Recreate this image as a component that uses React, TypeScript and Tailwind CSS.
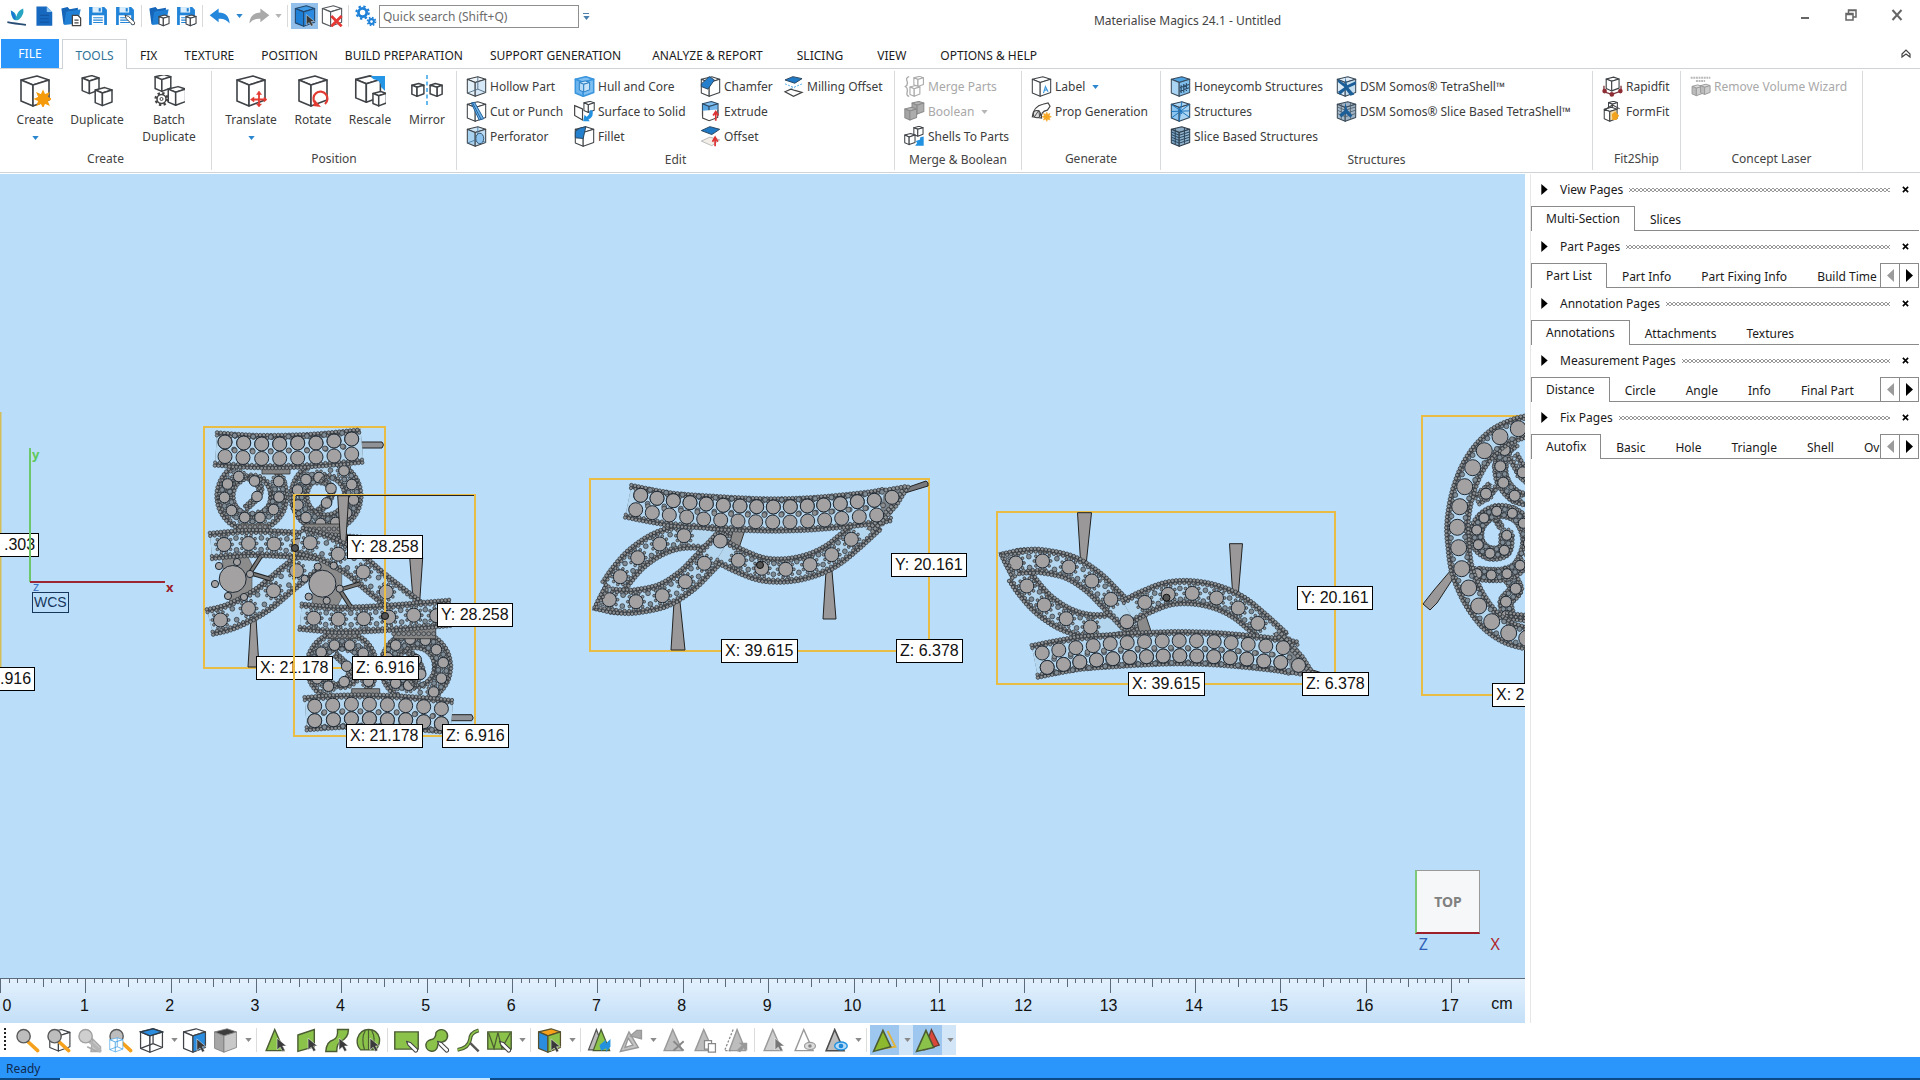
import type { ReactNode } from "react";
import clsx from "clsx";

type Pt = [number, number];

/* ---------- small drawing helpers for the icons ---------- */

type CubeProps = {
  x?: number;
  y?: number;
  s?: number;
  top?: string;
  left?: string;
  right?: string;
  line?: string;
  w?: number;
};

function Cube({ x = 0, y = 0, s = 1, top = "#fff", left = "#fff", right = "#fff", line = "#3f4347", w = 1.6 }: CubeProps) {
  return (
    <g transform={`translate(${x} ${y}) scale(${s})`} stroke={line} strokeWidth={w / s} strokeLinejoin="round">
      <path d="M2 5 18 1 30 5 14 10Z" fill={top} />
      <path d="M2 5 14 10V31L2 26Z" fill={left} />
      <path d="M14 10 30 5V25L14 31Z" fill={right} />
    </g>
  );
}

function Wire({ line = "#2d8fe0", w = 1.4 }: { line?: string; w?: number }) {
  return (
    <g fill="none" stroke={line} strokeWidth={w} strokeLinejoin="round">
      <path d="M2 26 18 20 30 25M18 20V1" />
    </g>
  );
}

function Pointer({ x, y, fill = "#3a3a3a" }: { x: number; y: number; fill?: string }) {
  return (
    <path
      transform={`translate(${x} ${y})`}
      d="M0 0V15L4 11.5 7 17 10 15.5 7 10H12Z"
      fill={fill}
      stroke="#fff"
      strokeWidth=".6"
    />
  );
}

function Pen({ x, y }: { x: number; y: number }) {
  return (
    <path
      transform={`translate(${x} ${y})`}
      d="M0 0 5 1.5 14 10Q15 14 11 14L2 5Z"
      fill="#fff"
      stroke="#444"
      strokeWidth="1.4"
      strokeLinejoin="round"
    />
  );
}

function Lens({ gray = false }: { gray?: boolean }) {
  return (
    <g>
      <path d="M16 17 29 29" stroke={gray ? "#b5b5b5" : "#f5a11c"} strokeWidth="4.5" strokeLinecap="round" />
      <circle cx="11" cy="10.5" r="8.5" fill={gray ? "#cfcfcf" : "#bdbdbd"} stroke={gray ? "#a0a0a0" : "#5a5a5a"} strokeWidth="1.8" />
    </g>
  );
}

const folder = (
  <g fill="#1f7fd4">
    <path d="M2 5 11 3 14 6 26 4V9L10 10 7 28H5Z" fill="#1565b8" />
    <path d="M9 10 30 6 26 27 6 29Z" />
  </g>
);

const floppy = (
  <g>
    <path d="M3 3H25L29 7V29H3Z" fill="#2184d8" />
    <rect x="8" y="3" width="14" height="8" fill="#dceefb" />
    <rect x="17" y="4.5" width="3" height="5" fill="#2184d8" />
    <rect x="7" y="15" width="18" height="14" fill="#fff" />
    <path d="M9 18.5H23M9 22H23M9 25.5H23" stroke="#2184d8" strokeWidth="1.5" />
  </g>
);

const tri = "M15 2 27 29 4 29Z";
const star = "M24 17 25.5 20.5 29 19 27.5 22.5 31 24 27.5 25.5 29 29 25.5 27.5 24 31 22.5 27.5 19 29 20.5 25.5 17 24 20.5 22.5 19 19 22.5 20.5Z";
const green = "#8bc34a";

const icons: Record<string, ReactNode> = {
  logo: (
    <g>
      <path d="M7 8Q14 10 15 17 17 8 25 5 27 14 19 21 13 24 10 20 7 15 7 8Z" fill="#29a5c4" />
      <path d="M7 8Q14 12 14 21 9 21 7 8Z" fill="#1976d2" />
      <path d="M2 25Q12 27 29 29" stroke="#274d75" strokeWidth="2.5" fill="none" />
    </g>
  ),
  doc: (
    <g>
      <path d="M5 2H20L28 10V30H5Z" fill="#1769c0" />
      <path d="M20 2V10H28Z" fill="#8cc4f2" />
      <path d="M10 15H23M10 20H23M10 25H23" stroke="#1257a5" strokeWidth="1.8" />
    </g>
  ),
  open: (
    <g>
      {folder}
      <path d="M18 15H26L30 19V30H18Z" fill="#fff" stroke="#444" strokeWidth="1.8" />
      <path d="M21 22H27M21 26H27" stroke="#444" strokeWidth="1.5" />
    </g>
  ),
  save: floppy,
  saveAs: (
    <g>
      {floppy}
      <Pen x={16} y={15} />
    </g>
  ),
  openPart: (
    <g>
      {folder}
      <Cube x={15} y={14} s={0.52} w={1.6} />
    </g>
  ),
  savePart: (
    <g>
      {floppy}
      <Cube x={15} y={14} s={0.52} w={1.6} />
    </g>
  ),
  undo: <path d="M1 15 14 5V11Q29 11 30 27 24 19 14 20V25Z" fill="#2487dc" />,
  redo: <path d="M31 15 18 5V11Q3 11 2 27 8 19 18 20V25Z" fill="#a9a9a9" />,
  select: (
    <g>
      <Cube top="#3f9be6" left="#1e7fd6" right="#2c8be0" line="#24486d" />
      <Pointer x={18} y={14} />
    </g>
  ),
  deselect: (
    <g>
      <Cube line="#55595d" />
      <path d="M15 16 30 31M30 16 15 31" stroke="#e53935" strokeWidth="4" />
    </g>
  ),
  gears: (
    <g fill="none" stroke="#1f82d8">
      <circle cx="11" cy="11" r="6" strokeWidth="4" />
      <circle cx="11" cy="11" r="9" strokeWidth="3" strokeDasharray="3.5 3.56" />
      <circle cx="24" cy="24" r="3.5" strokeWidth="3" />
      <circle cx="24" cy="24" r="5.8" strokeWidth="2.4" strokeDasharray="2.3 2.25" />
    </g>
  ),
  create: (
    <g>
      <Cube />
      <path d={star} fill="#f59b0b" stroke="#f59b0b" strokeWidth="2" />
    </g>
  ),
  duplicate: (
    <g>
      <Cube s={0.6} w={1.5} />
      <Cube x={13} y={12} s={0.6} w={1.5} />
    </g>
  ),
  batch: (
    <g>
      <Cube x={1} y={-1} s={0.56} w={1.5} />
      <Cube x={14} y={11} s={0.62} w={1.5} />
      <g fill="#fff" stroke="#444">
        <circle cx="8.5" cy="24" r="5.6" strokeWidth="3" strokeDasharray="2.2 2.2" />
        <circle cx="8.5" cy="24" r="4.5" strokeWidth="1.5" />
        <circle cx="8.5" cy="24" r="1.5" strokeWidth="1" />
      </g>
    </g>
  ),
  translate: (
    <g>
      <Cube />
      <g stroke="#e33b32" strokeWidth="1.8" fill="#e33b32">
        <path d="M24 18V31M17 24.5H31" />
        <path d="M24 16 26.5 19.5H21.5ZM24 32 26.5 29H21.5ZM15.5 24.5 19 22V27ZM32 24.5 29 22V27Z" strokeWidth=".5" />
      </g>
    </g>
  ),
  rotate: (
    <g>
      <Cube />
      <path d="M18 28A7 7 0 1 1 28 29" fill="none" stroke="#e33b32" strokeWidth="2.2" />
      <path d="M16 31 24 32 18 25Z" fill="#e33b32" />
    </g>
  ),
  rescale: (
    <g>
      <Cube s={0.88} />
      <path d="M17 1H31V16L27 12Q27 5 19 4Z" fill="#2596e6" />
      <Cube x={18} y={16} s={0.48} w={1.5} />
    </g>
  ),
  mirror: (
    <g>
      <Cube x={0} y={8} s={0.43} w={1.5} />
      <g transform="translate(32 0) scale(-1 1)">
        <Cube x={0} y={8} s={0.43} w={1.5} />
      </g>
      <path d="M16 0V32" stroke="#36a3e8" strokeWidth="1.5" strokeDasharray="4 2.5" />
    </g>
  ),
  hollow: (
    <g>
      <Cube top="#eef6fc" left="#e2f0fa" right="#d4e8f7" />
      <Wire line="#546e84" />
    </g>
  ),
  cut: (
    <g>
      <Cube />
      <path d="M8 3 13 2 27 27 20 29Z" fill="#6fb3e8" stroke="#1f5f99" strokeWidth="1.5" />
      <path d="M10 3 23 28" stroke="#1f5f99" strokeWidth="1.5" />
    </g>
  ),
  perforator: (
    <g>
      <Cube top="#cfe6f7" left="#a9d2f1" right="#bddcf4" />
      <Wire line="#4c7ea6" />
      <ellipse cx="21" cy="19" rx="6" ry="8" fill="#8cc3ef" stroke="#35536c" strokeWidth="1.5" />
    </g>
  ),
  hull: (
    <g>
      <Cube top="#7fc0f2" left="#6db6f0" right="#7fc0f2" line="#3b96de" w={2.4} />
      <Cube x={7} y={7} s={0.56} top="#d5ebfb" left="#b6dbf7" right="#c6e3f9" line="#2b7fc4" w={1.5} />
    </g>
  ),
  surface: (
    <g>
      <path d="M1 7 13 12V29L1 22Z" fill="#fff" stroke="#444" strokeWidth="1.8" />
      <Cube x={14} y={0} s={0.56} w={1.6} />
      <path d="M28 14Q31 24 22 28L24 31H14L16 21 19 24Q24 21 24 14Z" fill="#2191e0" />
    </g>
  ),
  fillet: (
    <g>
      <Cube />
      <path d="M2 8Q8 2 18 1L16 10 14 19 2 18Z" fill="#2480cc" stroke="#2a4660" strokeWidth="1.5" />
    </g>
  ),
  chamfer: (
    <g>
      <Cube />
      <path d="M2 12 14 1 22 6 12 20 2 16Z" fill="#2480cc" stroke="#2a4660" strokeWidth="1.5" />
    </g>
  ),
  extrude: (
    <g>
      <Cube x={2} s={0.85} top="#7fbdee" left="#54a4e2" right="#73b5ea" line="#304c66" />
      <path d="M4 15V26L14 30 27 25V13" fill="#fff" stroke="#444" strokeWidth="1.6" />
      <path d="M24 30V18M20 22 24 16 28 22" stroke="#d33" strokeWidth="2.6" fill="none" />
    </g>
  ),
  offset: (
    <g>
      <path d="M2 7 15 1 30 5 18 13Z" fill="#1f79c4" stroke="#2a4660" strokeWidth="1.5" />
      <path d="M2 23 15 17 30 21 18 30Z" fill="#f3efe8" stroke="#bbb" strokeWidth="1.5" />
      <path d="M23 31V20M19 24 23 17 27 24" stroke="#d33" strokeWidth="2.6" fill="none" />
    </g>
  ),
  milling: (
    <g>
      <path d="M3 6 15 1 29 4 18 11Z" fill="#1f79c4" stroke="#2a4660" strokeWidth="1.5" />
      <path d="M3 12 18 18M29 12 10 20" stroke="#5db0ea" strokeWidth="1.5" strokeDasharray="3 2" />
      <path d="M3 24 12 20 18 22 29 25 16 31Z" fill="#fff" stroke="#444" strokeWidth="1.8" />
    </g>
  ),
  merge: (
    <g>
      <path d="M8 1Q2 2 5 9 6 14 2 16 6 18 5 24 3 30 8 31" fill="none" stroke="#aaa" strokeWidth="2" />
      <Cube x={14} y={0} s={0.52} line="#aaa" w={1.7} />
      <Cube x={8} y={14} s={0.54} line="#aaa" w={1.7} />
    </g>
  ),
  boolean: (
    <g>
      <Cube x={11} y={0} s={0.64} top="#b5b5b5" left="#a5a5a5" right="#adadad" line="#8c8c8c" />
      <Cube x={0} y={9} s={0.64} top="#b5b5b5" left="#a5a5a5" right="#adadad" line="#8c8c8c" />
    </g>
  ),
  shells: (
    <g>
      <Cube x={14} y={0} s={0.5} w={1.6} />
      <Cube x={0} y={11} s={0.56} w={1.6} />
      <path d="M30 16V30H17L20 26 18 23 24 21 25 17Z" fill="#2191e0" />
    </g>
  ),
  label: (
    <g>
      <Cube />
      <path d="M19 26 22 16 26 24M20 22 25 21" stroke="#3b97de" strokeWidth="1.8" fill="none" />
    </g>
  ),
  prop: (
    <g>
      <path d="M2 24Q4 8 18 5L26 3 29 8 25 14Q14 16 16 26Z" fill="#fff" stroke="#444" strokeWidth="1.8" />
      <circle cx="9" cy="20" r="5.5" fill="#ddd" stroke="#444" strokeWidth="1.8" />
      <path d="M6 23 12 14 13 24" stroke="#444" strokeWidth="1.4" fill="none" />
      <path d={star} fill="#f5a623" stroke="#f5a623" />
    </g>
  ),
  honeycomb: (
    <g>
      <Cube top="#4da2e2" left="#a9d4f3" right="#7fbdea" line="#3b4c5c" />
      <path d="M17 14V26M21 12V25M25 11V23M15 18 29 13M15 23 29 18" stroke="#2c4b66" strokeWidth="1.8" />
    </g>
  ),
  structures: (
    <g>
      <Cube top="#a9d4f3" left="#8cc5ef" right="#a9d4f3" line="#345" />
      <path d="M2 5 30 25M30 5 2 26M14 10 18 20M2 16 30 15M18 1 14 31" stroke="#1f76bd" strokeWidth="1.5" />
    </g>
  ),
  sliceStructures: (
    <g>
      <Cube top="#8aa9c2" left="#7ba3c4" right="#8fb2cd" line="#2e3b47" />
      <path d="M2 9 14 14 30 9M2 13 14 18 30 13M2 17 14 22 30 17M2 21 14 26 30 21M8 3V28M22 3V27" fill="none" stroke="#2c465c" strokeWidth="1.5" />
    </g>
  ),
  tetra: (
    <g>
      <Cube top="#dcebf6" left="#dcebf6" right="#c4ddef" line="#3a4a58" />
      <path d="M14 1 17 14 30 8V13L19 18 28 28 22 30 15 21 6 29 3 24 13 17 3 9V5L14 12Z" fill="#1c5f98" />
    </g>
  ),
  tetraSlice: (
    <g>
      <Cube top="#9fb3c4" left="#a9bccb" right="#9fb3c4" line="#3a4a58" />
      <path d="M2 9 14 14 30 9M2 14 14 19 30 14M2 19 14 24 30 19M8 3V28M22 3V27" fill="none" stroke="#50606d" strokeWidth="1.3" />
      <path d="M14 2 17 13 25 22 22 25 15 19 8 25 5 21 13 14Z" fill="#1c5f98" />
    </g>
  ),
  rapidfit: (
    <g>
      <Cube x={5} y={1} s={0.7} w={1.7} />
      <path d="M3 15V24L15 28 29 23V15" fill="none" stroke="#7b3136" strokeWidth="2" />
      <g fill="#8e2c33">
        <circle cx="4" cy="23" r="3.5" />
        <circle cx="15" cy="28" r="3.5" />
        <circle cx="28" cy="23" r="3.5" />
      </g>
    </g>
  ),
  formfit: (
    <g>
      <Cube x={9} y={0} s={0.48} w={1.6} />
      <Cube x={2} y={9} s={0.7} w={1.6} right="#f5d9a0" />
      <path d="M15 20 20 16 26 22 22 29 16 29Z" fill="#f2a31d" />
      <path d="M5 13 16 6 27 12" fill="none" stroke="#444" strokeWidth="1.6" />
    </g>
  ),
  concept: (
    <g>
      <path d="M1 2.5H31M9 7.5H23" stroke="#b9b9b9" strokeWidth="3" strokeDasharray="3 1" />
      <Cube x={2} y={13} s={0.55} top="#ddd" left="#bbb" right="#ccc" line="#999" w={1.4} />
      <Cube x={15} y={12} s={0.52} top="#ddd" left="#bbb" right="#ccc" line="#999" w={1.4} />
    </g>
  ),
  zoom: <Lens />,
  zoomPart: (
    <g>
      <Cube x={3} y={1} s={0.92} w={1.5} />
      <Lens />
    </g>
  ),
  zoomPrev: (
    <g>
      <path d="M13 24 26 30M20 14 30 24 30 30 18 30Z" stroke="#aaa" strokeWidth="2" fill="#ccc" />
      <Lens gray />
    </g>
  ),
  zoomAll: (
    <g>
      <Lens />
      <g transform="translate(1 12) scale(.6)">
        <Cube line="#3ea1e6" w={1.4} />
        <Wire />
      </g>
    </g>
  ),
  viewTop: (
    <g>
      <Cube />
      <Wire line="#3f4347" w={1.6} />
      <path d="M2 5 18 1 30 5 14 10Z" fill="#2b8de0" stroke="#2f3c48" strokeWidth="1.8" />
    </g>
  ),
  viewSel: (
    <g>
      <Cube right="#2b8de0" />
      <Pointer x={19} y={14} />
    </g>
  ),
  shaded: <Cube top="#3c3c3c" left="#a6a6a6" right="#c9c9c9" line="#777" w={1} />,
  markTri: (
    <g>
      <path d={tri} fill={green} stroke="#4b5c33" strokeWidth="1.8" />
      <Pointer x={18} y={13} />
    </g>
  ),
  markPlane: (
    <g>
      <path d="M5 9 26 2V24L5 30Z" fill={green} stroke="#4b5c33" strokeWidth="1.8" />
      <Pointer x={18} y={13} />
    </g>
  ),
  markSurface: (
    <g>
      <path d="M16 2H30Q30 13 20 17 15 20 15 30H1Q2 17 11 15 17 12 16 2Z" fill={green} stroke="#4b5c33" strokeWidth="1.8" />
      <Pointer x={18} y={13} />
    </g>
  ),
  markShell: (
    <g>
      <path d="M6 28Q0 22 2 13 6 2 16 2 27 2 30 13 31 22 25 28Z" fill={green} stroke="#4b5c33" strokeWidth="1.8" />
      <path d="M11 28Q6 14 12 3M16 28V2M21 28Q26 14 20 3" fill="none" stroke="#4b5c33" strokeWidth="1.5" />
      <Pointer x={18} y={13} />
    </g>
  ),
  markRect: (
    <g>
      <path d="M1 5H31V27H1Z" fill={green} stroke="#4b5c33" strokeWidth="1.8" />
      <Pen x={16} y={17} />
    </g>
  ),
  markFree: (
    <g>
      <path d="M14 6A8 8 0 1 1 22 18Q16 18 16 24A7.5 7.5 0 1 1 7 15Q14 14 14 6Z" fill={green} stroke="#4b5c33" strokeWidth="1.8" />
      <Pen x={16} y={17} />
    </g>
  ),
  markPath: (
    <g>
      <path d="M29 3Q18 6 18 15 16 26 2 28" fill="none" stroke="#4b5c33" strokeWidth="5" />
      <path d="M29 3Q18 6 18 15 16 26 2 28" fill="none" stroke={green} strokeWidth="2.2" />
      <path d="M18 19 29 30" stroke="#555" strokeWidth="3" />
    </g>
  ),
  markMesh: (
    <g>
      <path d="M1 5H31V27H1Z" fill={green} stroke="#4b5c33" strokeWidth="1.8" />
      <path d="M2 6 9 26 14 6 19 26 30 6" fill="none" stroke="#4b5c33" strokeWidth="1.6" />
      <Pen x={16} y={17} />
    </g>
  ),
  faceColor: (
    <g>
      <Cube top="#f6a11b" left="#2b8de0" right={green} line="#56502c" />
      <Pointer x={18} y={14} />
    </g>
  ),
  triSwap: (
    <g>
      <path d="M12 2 22 28H2Z" fill="#bbb" stroke="#555" strokeWidth="1.6" />
      <path d="M18 2 29 29H8Z" fill={green} stroke="#4b5c33" strokeWidth="1.6" />
      <path d="M16 22 24 15V20L30 14 30 24 24 31 25 26 18 29Z" fill="#2191e0" />
    </g>
  ),
  triEdit: (
    <g fill="#c4c4c4" stroke="#999" strokeWidth="1.8">
      <path d="M14 5 26 25 3 30Z" />
      <path d="M13 13 19 22 9 25Z" fill="#fff" />
      <path d="M16 10 24 3H30V14Z" fill="#aaa" />
    </g>
  ),
  triDelete: (
    <g>
      <path d={tri} fill="#bdbdbd" stroke="#999" strokeWidth="1.8" />
      <path d="M16 17 29 29M29 17 16 29" stroke="#888" strokeWidth="2.5" />
    </g>
  ),
  triCopy: (
    <g>
      <path d={tri} fill="#bdbdbd" stroke="#999" strokeWidth="1.8" />
      <g fill="#fff" stroke="#888" strokeWidth="1.6">
        <path d="M16 16H25V27H16Z" />
        <path d="M21 20H30V31H21Z" />
      </g>
    </g>
  ),
  triMove: (
    <g>
      <path d="M18 2 29 29H8Z" fill="#bdbdbd" stroke="#999" strokeWidth="1.8" />
      <path d="M13 2 2 29H10" fill="none" stroke="#888" strokeWidth="1.6" strokeDasharray="3 2" />
      <path d="M17 29 24 22 20 19H31V29L27 25 22 31Z" fill="#999" />
    </g>
  ),
  triSelect: (
    <g>
      <path d={tri} fill="#cfcfcf" stroke="#999" strokeWidth="1.8" />
      <Pointer x={18} y={13} fill="#777" />
    </g>
  ),
  triHide: (
    <g>
      <path d={tri} fill="#fff" stroke="#999" strokeWidth="1.8" />
      <ellipse cx="23" cy="23" rx="7" ry="4.5" fill="#ddd" stroke="#999" strokeWidth="1.5" />
      <circle cx="23" cy="23" r="2.3" fill="#888" />
    </g>
  ),
  triShow: (
    <g>
      <path d={tri} fill="#bdbdbd" stroke="#4c4c4c" strokeWidth="2" />
      <ellipse cx="23" cy="23" rx="8" ry="5" fill="#b8dcf7" stroke="#2191e0" strokeWidth="1.8" />
      <circle cx="23" cy="23" r="3" fill="#1f87d8" />
    </g>
  ),
  triFlag: (
    <g>
      <path d="M20 4 30 24 8 27" fill="none" stroke="#e0b33a" strokeWidth="2.4" />
      <path d="M14 3 24 24 2 30Z" fill="#8db92e" stroke="#4b5c33" strokeWidth="2" />
    </g>
  ),
  triPair: (
    <g>
      <path d="M21 2 31 22 12 28Z" fill="#d9483b" stroke="#6c3a2c" strokeWidth="1.6" />
      <path d="M14 3 24 25 2 30Z" fill={green} stroke="#4b5c33" strokeWidth="2" />
    </g>
  ),
};

function Icon({ name, className }: { name: string; className: string }) {
  return (
    <svg viewBox="0 0 32 32" className={clsx("shrink-0", className)} aria-hidden="true">
      {icons[name]}
    </svg>
  );
}

function Caret({ color = "fill-[#2a86cf]" }: { color?: string }) {
  return (
    <svg viewBox="0 0 8 5" className={clsx("h-[4px] w-[7px] shrink-0", color)} aria-hidden="true">
      <path d="M0 0H8L4 5Z" />
    </svg>
  );
}

/* ---------- title bar ---------- */

function QuickButton({ name, label, active }: { name: string; label: string; active?: boolean }) {
  return (
    <button type="button" aria-label={label} className={clsx("grid h-[26px] w-[27px] place-items-center", active && "bg-[#92c0ea]")}>
      <Icon name={name} className="size-[22px]" />
    </button>
  );
}

function QuickDivider() {
  return <div className="mx-[3px] h-[22px] w-px bg-[#dadada]" />;
}

function TitleBar() {
  return (
    <header className="flex h-[39px] items-start">
      <div className="flex items-center pt-[3px] pl-[3px]">
        <QuickButton name="logo" label="Magics" />
        <QuickButton name="doc" label="New" />
        <QuickButton name="open" label="Open" />
        <QuickButton name="save" label="Save" />
        <QuickButton name="saveAs" label="Save as" />
        <QuickDivider />
        <QuickButton name="openPart" label="Import part" />
        <QuickButton name="savePart" label="Export part" />
        <QuickDivider />
        <QuickButton name="undo" label="Undo" />
        <div className="flex w-[12px] justify-center">
          <Caret />
        </div>
        <QuickButton name="redo" label="Redo" />
        <div className="flex w-[12px] justify-center">
          <Caret color="fill-[#b5b5b5]" />
        </div>
        <QuickDivider />
        <QuickButton name="select" label="Select" active />
        <QuickButton name="deselect" label="Unselect" />
        <QuickDivider />
        <QuickButton name="gears" label="Settings" />
        <input
          type="text"
          aria-label="Quick search"
          placeholder="Quick search (Shift+Q)"
          className="h-[23px] w-[200px] border border-[#8f8f8f] bg-white px-[3px] text-[12px] text-[#333] placeholder:text-[#6c6c6c]"
        />
        <button type="button" aria-label="Customize" className="flex w-[14px] flex-col items-center gap-[2px]">
          <span className="h-px w-[6px] bg-[#4a7fae]" />
          <Caret color="fill-[#4a7fae]" />
        </button>
      </div>
      <h1 className="flex-1 pt-[11px] text-center text-[12px] leading-[20px] text-[#444]">Materialise Magics 24.1 - Untitled</h1>
      <div className="flex h-[30px] text-[#666]">
        <button type="button" aria-label="Minimize" className="grid w-[46px] place-items-center">
          <svg viewBox="0 0 14 14" className="size-[14px]" stroke="currentColor" strokeWidth="2">
            <path d="M3 10H11" />
          </svg>
        </button>
        <button type="button" aria-label="Restore" className="grid w-[46px] place-items-center">
          <svg viewBox="0 0 14 14" className="size-[14px]" fill="none" stroke="currentColor" strokeWidth="1.5">
            <path d="M2 5.5H9V12H2ZM4.5 5V2H12V9H9.5M2 6.5H9M4.5 2.5H12" />
          </svg>
        </button>
        <button type="button" aria-label="Close" className="grid w-[46px] place-items-center">
          <svg viewBox="0 0 14 14" className="size-[14px]" stroke="currentColor" strokeWidth="2">
            <path d="M2.5 2 11.5 12M11.5 2 2.5 12" />
          </svg>
        </button>
      </div>
    </header>
  );
}

/* ---------- ribbon ---------- */

const ribbonTabs = [
  { label: "FIX" },
  { label: "TEXTURE" },
  { label: "POSITION" },
  { label: "BUILD PREPARATION" },
  { label: "SUPPORT GENERATION" },
  { label: "ANALYZE & REPORT", wide: true },
  { label: "SLICING", wide: true },
  { label: "VIEW", wide: true },
  { label: "OPTIONS & HELP", wide: true },
];

function RibbonTabs() {
  return (
    <nav className="relative z-10 -mb-px flex h-[30px] items-stretch text-[12px] text-[#1c1c1c]">
      <button type="button" className="mr-[3px] ml-px mb-px w-[58px] bg-[#2a96fb] pt-px text-white">
        FILE
      </button>
      <button type="button" className="w-[65px] border border-b-0 border-[#d0d3d6] bg-white pt-[3px] text-[#2f7396]">
        TOOLS
      </button>
      {ribbonTabs.map((tab) => (
        <button key={tab.label} type="button" className={clsx("pt-[4px]", tab.wide ? "px-[17px]" : "pr-[14px] pl-[13px]")}>
          {tab.label}
        </button>
      ))}
      <button type="button" aria-label="Collapse ribbon" className="mr-[8px] ml-auto text-[#444]">
        <svg viewBox="0 0 12 12" className="size-[12px]" fill="none" stroke="currentColor" strokeWidth="1.2">
          <path d="M2 6 6 2 10 6V9L6 6 2 9Z" />
        </svg>
      </button>
    </nav>
  );
}

type BigItem = { icon: string; label: string; width: string; caret?: boolean };
type SmallItem = { icon: string; label: string; disabled?: boolean; caret?: boolean };
type Column = { width: string; items: SmallItem[] };

function Group({ title, width, children }: { title: string; width: string; children: ReactNode }) {
  return (
    <section className={clsx("flex shrink-0 flex-col border-r border-[#d8dadc]", width)}>
      <div className="flex flex-1">{children}</div>
      <h2 className="h-[22px] text-center text-[12px] leading-[22px] text-[#444]">{title}</h2>
    </section>
  );
}

function BigButtons({ items }: { items: BigItem[] }) {
  return (
    <>
      {items.map((item) => (
        <button key={item.label} type="button" className={clsx("flex flex-col items-center pt-[4px] text-[12px] leading-[17px] text-[#3c3c3c]", item.width)}>
          <Icon name={item.icon} className="mb-[4px] size-[32px]" />
          {item.label}
          {item.caret ? (
            <span className="pt-[8px]">
              <Caret />
            </span>
          ) : null}
        </button>
      ))}
    </>
  );
}

function SmallColumn({ column }: { column: Column }) {
  return (
    <div className={clsx("flex shrink-0 flex-col", column.width)}>
      {column.items.map((item) => (
        <button
          key={item.label}
          type="button"
          disabled={item.disabled}
          className={clsx("flex h-[25px] items-center gap-[3px] text-[12px] whitespace-nowrap", item.disabled ? "text-[#a8a8a8]" : "text-[#3c3c3c]")}
        >
          <Icon name={item.icon} className="size-[21px]" />
          {item.label}
          {item.caret ? (
            <span className="pl-[4px]">
              <Caret color={item.disabled ? "fill-[#b5b5b5]" : undefined} />
            </span>
          ) : null}
        </button>
      ))}
    </div>
  );
}

const createItems: BigItem[] = [
  { icon: "create", label: "Create", width: "w-[62px]", caret: true },
  { icon: "duplicate", label: "Duplicate", width: "w-[62px]" },
  { icon: "batch", label: "Batch Duplicate", width: "w-[82px] px-[10px]" },
];

const positionItems: BigItem[] = [
  { icon: "translate", label: "Translate", width: "w-[62px]", caret: true },
  { icon: "rotate", label: "Rotate", width: "w-[62px]" },
  { icon: "rescale", label: "Rescale", width: "w-[52px]" },
  { icon: "mirror", label: "Mirror", width: "w-[62px]" },
];

const smallGroups: { title: string; width: string; columns: Column[] }[] = [
  {
    title: "Edit",
    width: "w-[438px]",
    columns: [
      {
        width: "w-[108px]",
        items: [
          { icon: "hollow", label: "Hollow Part" },
          { icon: "cut", label: "Cut or Punch" },
          { icon: "perforator", label: "Perforator" },
        ],
      },
      {
        width: "w-[126px]",
        items: [
          { icon: "hull", label: "Hull and Core" },
          { icon: "surface", label: "Surface to Solid" },
          { icon: "fillet", label: "Fillet" },
        ],
      },
      {
        width: "w-[83px]",
        items: [
          { icon: "chamfer", label: "Chamfer" },
          { icon: "extrude", label: "Extrude" },
          { icon: "offset", label: "Offset" },
        ],
      },
      { width: "w-[109px]", items: [{ icon: "milling", label: "Milling Offset" }] },
    ],
  },
  {
    title: "Merge & Boolean",
    width: "w-[127px]",
    columns: [
      {
        width: "w-[116px]",
        items: [
          { icon: "merge", label: "Merge Parts", disabled: true },
          { icon: "boolean", label: "Boolean", disabled: true, caret: true },
          { icon: "shells", label: "Shells To Parts" },
        ],
      },
    ],
  },
  {
    title: "Generate",
    width: "w-[139px]",
    columns: [
      {
        width: "w-[126px]",
        items: [
          { icon: "label", label: "Label", caret: true },
          { icon: "prop", label: "Prop Generation" },
        ],
      },
    ],
  },
  {
    title: "Structures",
    width: "w-[432px]",
    columns: [
      {
        width: "w-[166px]",
        items: [
          { icon: "honeycomb", label: "Honeycomb Structures" },
          { icon: "structures", label: "Structures" },
          { icon: "sliceStructures", label: "Slice Based Structures" },
        ],
      },
      {
        width: "w-[250px]",
        items: [
          { icon: "tetra", label: "DSM Somos® TetraShell™" },
          { icon: "tetraSlice", label: "DSM Somos® Slice Based TetraShell™" },
        ],
      },
    ],
  },
  {
    title: "Fit2Ship",
    width: "w-[88px]",
    columns: [
      {
        width: "w-[74px]",
        items: [
          { icon: "rapidfit", label: "Rapidfit" },
          { icon: "formfit", label: "FormFit" },
        ],
      },
    ],
  },
  {
    title: "Concept Laser",
    width: "w-[182px]",
    columns: [{ width: "w-[170px]", items: [{ icon: "concept", label: "Remove Volume Wizard", disabled: true }] }],
  },
];

function Ribbon() {
  return (
    <div className="flex h-[105px] items-stretch border-y border-[#d0d3d6] py-[2px]">
      <Group title="Create" width="w-[212px]">
        <div className="flex pl-[4px]">
          <BigButtons items={createItems} />
        </div>
      </Group>
      <Group title="Position" width="w-[245px]">
        <div className="flex pl-[8px]">
          <BigButtons items={positionItems} />
        </div>
      </Group>
      {smallGroups.map((group) => (
        <Group key={group.title} title={group.title} width={group.width}>
          <div className="flex pt-[3px] pl-[9px]">
            {group.columns.map((column) => (
              <SmallColumn key={column.items[0].label} column={column} />
            ))}
          </div>
        </Group>
      ))}
    </div>
  );
}

/* ---------- scene: jewellery parts ---------- */

function spline(pts: Pt[]): Pt[] {
  const out: Pt[] = [];
  for (let i = 0; i < pts.length - 1; i++) {
    const p0 = pts[Math.max(i - 1, 0)];
    const p1 = pts[i];
    const p2 = pts[i + 1];
    const p3 = pts[Math.min(i + 2, pts.length - 1)];
    for (let k = 0; k < 16; k++) {
      const t = k / 16;
      const at = (a: number, b: number, c: number, d: number) =>
        0.5 * (2 * b + (c - a) * t + (2 * a - 5 * b + 4 * c - d) * t * t + (3 * b - a - 3 * c + d) * t * t * t);
      out.push([at(p0[0], p1[0], p2[0], p3[0]), at(p0[1], p1[1], p2[1], p3[1])]);
    }
  }
  out.push(pts[pts.length - 1]);
  return out;
}

// Walks along a curve and drops a bead every `step`, shifted sideways by `off`.
function beadsAlong(curve: Pt[], off: number, step: number): Pt[] {
  const shifted: Pt[] = curve.map((p, i) => {
    const a = curve[Math.max(i - 1, 0)];
    const b = curve[Math.min(i + 1, curve.length - 1)];
    const len = Math.hypot(b[0] - a[0], b[1] - a[1]) || 1;
    return [p[0] - ((b[1] - a[1]) / len) * off, p[1] + ((b[0] - a[0]) / len) * off];
  });
  const out: Pt[] = [];
  let left = 0;
  for (let i = 1; i < shifted.length; i++) {
    const [ax, ay] = shifted[i - 1];
    const [bx, by] = shifted[i];
    const len = Math.hypot(bx - ax, by - ay);
    while (left < len) {
      const t = left / len;
      out.push([ax + (bx - ax) * t, ay + (by - ay) * t]);
      left += step;
    }
    left -= len;
  }
  return out;
}

const r1 = (n: number) => Math.round(n * 10) / 10;

function dots(pts: Pt[], r: number): string {
  return pts.map(([x, y]) => `M${r1(x - r)} ${r1(y)}a${r} ${r} 0 1 0 ${2 * r} 0a${r} ${r} 0 1 0 ${-2 * r} 0`).join("");
}

function Beads({ pts, r, fill = "#8d9092" }: { pts: Pt[]; r: number; fill?: string }) {
  return <path d={dots(pts, r)} fill={fill} stroke="#2b3036" strokeWidth=".7" />;
}

function Stones({ pts, r }: { pts: Pt[]; r: number }) {
  return <path d={dots(pts, r)} fill="#a3a1a1" stroke="#1f2a35" strokeWidth="1" />;
}

type BandProps = { path: Pt[]; half: number; stones?: Pt[]; r?: number; halo?: boolean };

function Band({ path, half, stones = [], r = 7, halo = true }: BandProps) {
  const curve = spline(path);
  const d = "M" + curve.map(([x, y]) => `${r1(x)} ${r1(y)}`).join("L");
  const halos: Pt[] = [];
  if (halo) {
    for (const [x, y] of stones) {
      for (let k = 0; k < 10; k++) {
        const a = (k * Math.PI) / 5;
        halos.push([x + Math.cos(a) * (r + 1.2), y + Math.sin(a) * (r + 1.2)]);
      }
    }
  }
  const links: Pt[] = [];
  for (let i = 1; i < stones.length; i++) {
    const [ax, ay] = stones[i - 1];
    const [bx, by] = stones[i];
    const len = Math.hypot(bx - ax, by - ay);
    if (len > 32) continue;
    const mx = (ax + bx) / 2;
    const my = (ay + by) / 2;
    const side = halo ? half * 0.42 : 7;
    links.push([mx - ((by - ay) / len) * side, my + ((bx - ax) / len) * side]);
    links.push([mx + ((by - ay) / len) * side, my - ((bx - ax) / len) * side]);
  }
  return (
    <g>
      <path d={d} fill="none" stroke="#555b61" strokeWidth={half * 2} />
      <path d={d} fill="none" stroke="#b4d6ee" strokeWidth={Math.max(half * 2 - 9, 0)} />
      <Beads pts={beadsAlong(curve, half - 1, 3.6)} r={1.8} />
      <Beads pts={beadsAlong(curve, 1 - half, 3.6)} r={1.8} />
      <Beads pts={beadsAlong(curve, half - 4, 4.6)} r={1.6} />
      <Beads pts={beadsAlong(curve, 4 - half, 4.6)} r={1.6} />
      <Beads pts={halos} r={1.4} />
      <Beads pts={links} r={2.4} fill="#7f8b95" />
      <Stones pts={stones} r={r} />
    </g>
  );
}

function ringPath(cx: number, cy: number, r: number): Pt[] {
  return Array.from({ length: 17 }, (_, i) => [cx + Math.cos((i * Math.PI) / 8) * r, cy + Math.sin((i * Math.PI) / 8) * r] as Pt);
}

const claspTop: Pt[] = [[225, 442], [243.7, 443], [261.7, 444], [279.7, 444], [297.7, 443], [316, 443], [334, 441], [351.7, 439]];
const claspBottom: Pt[] = [[225, 456.5], [243, 457.5], [261.7, 458.5], [279.7, 458.5], [297.7, 458], [316, 457], [334, 456], [351.7, 454]];
const claspMid: Pt[] = [[224, 544.5], [248.5, 543.5], [274, 544], [299, 545.5], [324, 547.5], [347, 547]];
const claspTail: Pt[] = [[220.5, 620], [248.5, 608.5], [273.5, 590.7], [296.5, 570.7]];
const ringOne: Pt[] = [[238.7, 476.5], [278.7, 481.5], [279, 497], [273.5, 509.5], [260, 517.5], [244.7, 517.5], [231.5, 510.5], [224.5, 497.5], [227.5, 484]];
const ringTwo: Pt[] = [[306, 479.5], [319, 477.5], [344, 470.7], [351.7, 484.5], [353.5, 500], [346.7, 513], [335.7, 522.5], [320.5, 523.5], [306, 517.5], [298, 505], [297.5, 490]];

// One half of the clasp; the second part in the scene is the same piece turned over.
function Clasp() {
  return (
    <g>
      <path d="M251 618H256L259 667H248Z" fill="#9a9898" stroke="#222" />
      <path d="M323.500 561H330L333 605H320Z" fill="#9a9898" stroke="#222" />
      <path d="M361 442H382Q385 444.5 382 448H361Z" fill="#8f9296" stroke="#222" />
      <path d="M222 555H247L252 565V600L230 602 224 580Z" fill="#8d8c8c" stroke="#444" strokeWidth=".6" />
      <Band path={[[210, 622], [232, 616], [262, 600], [290, 577], [326, 549]]} half={14} stones={claspTail} />
      <Band path={ringPath(252, 496, 27)} half={9.5} stones={ringOne} r={5.3} />
      <Band path={ringPath(326, 496, 27)} half={9.5} stones={ringTwo} r={5.3} />
      <Band path={[[250, 478], [260, 487], [257, 497], [246, 508]]} half={3} />
      <Band path={[[322, 480], [332, 489], [327, 503], [316, 513]]} half={3} />
      <Stones pts={[[254.5, 481], [257, 496.5], [331, 488.5], [326.5, 503]]} r={5.3} />
      <path d="M239 524H268V533H239ZM304 524H346V535H304ZM262 467H290V474H262Z" fill="#858585" stroke="#333" strokeWidth=".8" />
      <Beads pts={beadsAlong([[240, 527], [268, 527]], 0, 5)} r={2} />
      <Beads pts={beadsAlong([[304, 529], [346, 529]], 0, 5)} r={2} />
      <Band path={[[211, 546], [250, 543], [300, 545], [362, 550]]} half={14} stones={claspMid} />
      <Band path={[[216, 449], [256, 451.5], [300, 451], [330, 449], [362, 446]]} half={17.5} halo={false} stones={claspTop} r={7} />
      <Beads pts={claspTop.slice(1).map(([x, y]) => [x - 9, y + 7.5] as Pt)} r={2.5} />
      <Stones pts={claspTop} r={7} />
      <Stones pts={claspBottom} r={7} />
      <g fill="none">
        <path d="M261 556 250 573 270 579" stroke="#222" strokeWidth="4.5" />
        <path d="M261 556 250 573 270 579" stroke="#777" strokeWidth="2.5" />
      </g>
      <Stones pts={[[219, 566], [237, 562], [215, 584], [228, 596], [244, 597], [250, 574]]} r={3.6} />
      <Stones pts={[[232.7, 579]]} r={13.5} />
    </g>
  );
}

const wingTop: Pt[] = [[182, 106], [231, 115], [280, 122], [330, 128], [379, 132], [430, 136], [480, 138], [530, 140], [580, 141], [631, 140], [682, 138], [731, 135], [781, 131], [832, 125], [883, 121], [936, 112]];
const wingBottom: Pt[] = [[167, 149], [217, 158], [268, 165], [320, 171], [371, 177], [422, 180], [474, 183], [527, 185], [578, 186], [630, 186], [683, 183], [734, 180], [785, 175], [838, 170], [890, 165]];
const leafUpper: Pt[] = [[121, 350], [173, 293], [239, 252], [312, 227], [421, 243]];
const leafLower: Pt[] = [[88, 419], [168, 425], [247, 407], [316, 365], [373, 310]];
const crescent: Pt[] = [[475, 301], [545, 325], [617, 328], [690, 314], [755, 284], [814, 238]];

// Part outlines are digitised at three units per pixel.
const place = (pts: Pt[], ox: number, oy: number): Pt[] => pts.map(([x, y]) => [ox + x / 3, oy + y / 3]);

function Wing() {
  const at = (pts: Pt[]) => place(pts, 580, 460);
  const tip = at([[78, 375], [58, 412], [42, 446], [80, 455], [120, 460]]);
  return (
    <g>
      <path d="M674 602H680L685 650H671Z" fill="#9a9898" stroke="#222" />
      <path d="M826 571H832L836 619H823Z" fill="#9a9898" stroke="#222" />
      <path d="M903 489 926 481Q929 482 928 486L905 493Z" fill="#77797c" stroke="#222" />
      <path d="M733 530 745 530 738 551 728 551Z" fill="#8a8a8a" stroke="#333" />
      <path d="M594 609 606 584 622 592 620 613Z" fill="#9fb6c6" stroke="#555b61" strokeWidth="3" />
      <Band path={at([[98, 385], [125, 345], [173, 293], [239, 250], [312, 230], [390, 235], [440, 255]])} half={13} stones={at(leafUpper)} r={7} />
      <Band path={at([[95, 422], [130, 425], [168, 424], [247, 407], [316, 365], [373, 310], [435, 245]])} half={13} stones={at(leafLower)} r={7} />
      <Beads pts={beadsAlong(tip, 0, 3.6)} r={1.8} />
      <Beads pts={beadsAlong(tip, -3, 4)} r={1.6} />
      <Band path={at([[425, 275], [475, 301], [545, 327], [617, 331], [690, 317], [755, 287], [814, 240], [880, 180]])} half={13} stones={at(crescent)} r={7} />
      <path d="M888 488 909 487 884 526 866 530Z" fill="#6d7277" />
      <Band path={at([[145, 124], [268, 147], [379, 156], [480, 162], [578, 165], [683, 162], [781, 154], [880, 143], [925, 134]])} half={17.5} halo={false} stones={at(wingTop)} r={7} />
      <path d="M884 492 907 487 892 510 880 512Z" fill="#7b838a" />
      <Beads pts={beadsAlong([[908, 487], [896, 506], [872, 532]], 0, 3.8)} r={2} />
      <Beads pts={beadsAlong([[904, 488], [892, 506], [868, 530]], 0, 3.8)} r={2} />
      <Beads pts={beadsAlong([[886, 490], [908, 486]], 0, 3.8)} r={2} />
      <Beads pts={at(wingTop).slice(1).map(([x, y]) => [x - 9, y + 8] as Pt)} r={2.5} />
      <Stones pts={at(wingTop)} r={7} />
      <Stones pts={at(wingBottom)} r={7} />
      <Stones pts={at([[421, 243]])} r={7} />
      <circle cx="760" cy="565" r="3.5" fill="#555" stroke="#111" />
    </g>
  );
}

const medalOuter: Pt[] = [[415, 86], [360, 110], [313, 152], [278, 203], [254, 260], [239, 320], [232, 382], [236, 443], [245, 506], [266, 564], [296, 618], [335, 665], [386, 699], [440, 715]];
const medalSpiral: Pt[] = [[380, 406], [373, 451], [330, 460], [295, 434], [290, 390], [312, 354], [350, 334], [397, 340], [430, 370], [445, 430], [420, 496], [381, 521], [334, 525], [291, 521]];
const medalStem: Pt[] = [[381, 521], [407, 566], [378, 605], [380, 648], [340, 680]];
const medalVine: Pt[] = [[400, 125], [374, 150], [361, 199], [370, 248], [404, 287], [445, 300]];

function Medallion() {
  const at = (pts: Pt[]) => place(pts, 1380, 400);
  return (
    <g>
      <path d="M1451 570 1434 590 1423 604 1430 610 1437 603 1452 580Z" fill="#9a9898" stroke="#222" />
      <path d="M1524.5 650V684" stroke="#222" />
      <Band path={at(medalVine)} half={7} stones={at(medalVine.slice(1, 5))} r={5.5} />
      <Band path={at([[290, 300], [318, 281], [340, 255]])} half={6} stones={at([[318, 281]])} r={5.5} />
      <Band path={at([[400, 170], [428, 217], [450, 240]])} half={6} stones={at([[428, 217]])} r={5.5} />
      <Band path={at([[350, 360], [365, 385]])} half={3} />
      <Band path={at(medalStem)} half={7} stones={at(medalStem.slice(0, 4))} r={5.5} />
      <Band path={at(medalSpiral)} half={7} stones={at(medalSpiral)} r={5} />
      <Band path={at([[380, 648], [445, 655]])} half={4} />
      <Band path={at([[450, 78], ...medalOuter])} half={12} stones={at(medalOuter)} r={8} halo={false} />
    </g>
  );
}

function Bounds({ x, y, w, h }: { x: number; y: number; w: number; h: number }) {
  return <rect x={x} y={y} width={w} height={h} fill="none" stroke="#e9bd45" strokeWidth="2" />;
}

// The scene keeps screen coordinates, so the group is shifted up by the height of the bars above it.
function SceneDrawing() {
  return (
    <svg className="absolute inset-0 size-full" aria-hidden="true">
      <g transform="translate(0 -174)">
        <path d="M0 412V668" stroke="#d3bd59" strokeWidth="3" />
        <Bounds x={204} y={427} w={181} h={241} />
        <Bounds x={590} y={479} w={339} h={172} />
        <Bounds x={997} y={512} w={338} h={172} />
        <Bounds x={1422} y={416} w={200} h={279} />
        <Clasp />
        <g transform="translate(89.7 1162.7) scale(1 -1)">
          <Clasp />
        </g>
        <path d="M385 427V668" stroke="#e9bd45" strokeWidth="2" />
        <Bounds x={294} y={495} w={181} h={241} />
        <path d="M296 495.5H474" stroke="#222" />
        <circle cx="385" cy="616" r="3.5" fill="#555" stroke="#111" />
        <circle cx="295" cy="548" r="3.5" fill="#555" stroke="#111" />
        <Wing />
        <g transform="translate(406.5 1162.7) scale(1 -1)">
          <Wing />
        </g>
        <Medallion />
      </g>
    </svg>
  );
}

const tags = [
  { text: ".303", pos: "-left-px top-[359px] pl-[4px]" },
  { text: ".916", pos: "-left-px top-[493px] pl-0" },
  { text: "Y: 28.258", pos: "left-[347px] top-[361px]" },
  { text: "Y: 28.258", pos: "left-[437px] top-[429px]" },
  { text: "X: 21.178", pos: "left-[256px] top-[482px]" },
  { text: "Z: 6.916", pos: "left-[352px] top-[482px]" },
  { text: "X: 21.178", pos: "left-[346px] top-[550px]" },
  { text: "Z: 6.916", pos: "left-[442px] top-[550px]" },
  { text: "Y: 20.161", pos: "left-[891px] top-[379px]" },
  { text: "X: 39.615", pos: "left-[721px] top-[465px]" },
  { text: "Z: 6.378", pos: "left-[896px] top-[465px]" },
  { text: "Y: 20.161", pos: "left-[1297px] top-[412px]" },
  { text: "X: 39.615", pos: "left-[1128px] top-[498px]" },
  { text: "Z: 6.378", pos: "left-[1302px] top-[498px]" },
  { text: "X: 2", pos: "left-[1492px] top-[509px]" },
];

function Scene() {
  return (
    <div className="relative flex-1 overflow-hidden bg-[#badefa]">
      <SceneDrawing />
      {tags.map((tag) => (
        <span
          key={tag.pos}
          className={clsx("absolute h-[24px] border border-black bg-white px-[3px] font-['Liberation_Sans',sans-serif] text-[16px] leading-[22px] whitespace-nowrap text-[#111]", tag.pos)}
        >
          {tag.text}
        </span>
      ))}
      <svg className="absolute inset-0 size-full" aria-hidden="true">
        <path d="M294 470V520" stroke="#e9bd45" strokeWidth="2" />
        <path d="M30 274V408" stroke="#6cc86a" strokeWidth="2" />
        <path d="M30 408H165" stroke="#9c2733" strokeWidth="2" />
      </svg>
      <span className="absolute top-[271px] left-[32px] text-[13px] font-bold text-[#5fc95a]">y</span>
      <span className="absolute top-[404px] left-[166px] text-[13px] font-bold text-[#9c1f2a]">x</span>
      <span className="absolute top-[403px] left-[33px] text-[13px] text-[#3b6fc0]">z</span>
      <span className="absolute top-[418px] left-[32px] h-[21px] border border-[#16365c] px-px font-['Liberation_Sans',sans-serif] text-[14px] leading-[19px] text-[#16365c]">
        WCS
      </span>
      <button
        type="button"
        className="absolute right-[45px] bottom-[44px] h-[64px] w-[65px] border border-t-[#999] border-r-[#999] border-b-2 border-l-2 border-b-[#9c1f2a] border-l-[#7cc97a] bg-[#f6f7f9] text-[14px] font-bold text-[#808080]"
      >
        TOP
      </button>
      <span className="absolute right-[97px] bottom-[24px] text-[16px] leading-[20px] text-[#2f62b5]">Z</span>
      <span className="absolute right-[25px] bottom-[24px] text-[16px] leading-[20px] text-[#b01e2c]">X</span>
    </div>
  );
}

/* ---------- ruler ---------- */

const CM = 85.35;

function Ruler() {
  const ticks = Array.from({ length: 173 }, (_, i) => {
    const len = i % 10 === 0 ? 14 : i % 5 === 0 ? 8 : 4;
    return `M${Math.round((i * CM) / 10) + 0.5} 0v${len}`;
  }).join("");
  return (
    <div className="h-[45px] border-t border-[#5b6b7c] bg-linear-to-b from-[#e4f1fd] to-[#c3dff7]">
      <svg className="h-full w-full font-['Liberation_Sans',sans-serif] text-[16px]" role="img" aria-label="Scale in centimetres">
        <path d={ticks} stroke="#5b6b7c" />
        {Array.from({ length: 18 }, (_, i) => (
          <text key={i} x={i === 0 ? 7 : i * CM - 1} y="32" textAnchor="middle" fill="#111">
            {i}
          </text>
        ))}
        <text x="1502" y="30" textAnchor="middle" fill="#111">
          cm
        </text>
      </svg>
    </div>
  );
}

/* ---------- side panel ---------- */

const pages = [
  { title: "View Pages", tabs: ["Multi-Section", "Slices"] },
  { title: "Part Pages", tabs: ["Part List", "Part Info", "Part Fixing Info", "Build Time"], scroll: true },
  { title: "Annotation Pages", tabs: ["Annotations", "Attachments", "Textures"] },
  { title: "Measurement Pages", tabs: ["Distance", "Circle", "Angle", "Info", "Final Part"], scroll: true },
  { title: "Fix Pages", tabs: ["Autofix", "Basic", "Hole", "Triangle", "Shell", "Overlap"], scroll: true },
];

function ScrollButton({ flip }: { flip?: boolean }) {
  return (
    <button type="button" aria-label={flip ? "Scroll left" : "Scroll right"} className="grid w-[19px] place-items-center border-l border-[#8a8a8a] bg-white">
      <svg viewBox="0 0 7 13" className={clsx("h-[13px] w-[7px]", flip ? "rotate-180 fill-[#9b9b9b]" : "fill-black")}>
        <path d="M0 0 7 6.5 0 13Z" />
      </svg>
    </button>
  );
}

function SidePanel() {
  return (
    <aside className="ml-[5px] w-[390px] shrink-0 border-l border-[#e6e6e6] bg-white pr-px text-[12px] text-[#1a1a1a]">
      {pages.map((page) => (
        <section key={page.title} className="flex h-[57px] flex-col">
          <div className="flex h-[32px] items-center px-[10px] pb-px">
            <svg viewBox="0 0 7 12" className="mr-[12px] h-[11px] w-[7px]" aria-hidden="true">
              <path d="M0 0 7 6 0 12Z" />
            </svg>
            <h3>{page.title}</h3>
            <div className="mr-[12px] ml-[6px] h-[4px] flex-1 bg-[radial-gradient(#333_22%,transparent_28%),radial-gradient(#333_22%,transparent_28%)] bg-[length:4px_4px] bg-[position:0_0,2px_2px]" />
            <button type="button" aria-label={`Close ${page.title}`}>
              <svg viewBox="0 0 8 8" className="size-[7px]" stroke="#000" strokeWidth="1.8">
                <path d="M1 1 7 7M7 1 1 7" />
              </svg>
            </button>
          </div>
          <div className="flex h-[25px]">
            <div className="flex min-w-0 flex-1 overflow-hidden">
              {page.tabs.map((tab, i) => (
                <button
                  key={tab}
                  type="button"
                  className={clsx(
                    "shrink-0",
                    i === 0 ? "border border-b-0 border-[#8a8a8a] px-[14px]" : "border-b border-b-[#8a8a8a] px-[15px] pt-[3px]",
                  )}
                >
                  {tab}
                </button>
              ))}
              <div className="flex-1 border-b border-[#8a8a8a]" />
            </div>
            {page.scroll ? (
              <div className="flex border-y border-r border-[#8a8a8a]">
                <ScrollButton flip />
                <ScrollButton />
              </div>
            ) : null}
          </div>
        </section>
      ))}
    </aside>
  );
}

/* ---------- bottom tools ---------- */

type Tool = { icon: string; caret?: boolean; active?: boolean };

const toolGroups: Tool[][] = [
  [
    { icon: "zoom" },
    { icon: "zoomPart" },
    { icon: "zoomPrev" },
    { icon: "zoomAll" },
    { icon: "viewTop", caret: true },
    { icon: "viewSel" },
    { icon: "shaded", caret: true },
  ],
  [{ icon: "markTri" }, { icon: "markPlane" }, { icon: "markSurface" }, { icon: "markShell" }],
  [{ icon: "markRect" }, { icon: "markFree" }, { icon: "markPath" }, { icon: "markMesh", caret: true }],
  [{ icon: "faceColor", caret: true }],
  [{ icon: "triSwap" }, { icon: "triEdit", caret: true }, { icon: "triDelete" }, { icon: "triCopy" }, { icon: "triMove" }],
  [{ icon: "triSelect" }, { icon: "triHide" }, { icon: "triShow", caret: true }],
  [
    { icon: "triFlag", caret: true, active: true },
    { icon: "triPair", caret: true, active: true },
  ],
];

function MarkToolbar() {
  return (
    <div className="flex h-[34px] items-center bg-white">
      <div className="mr-[6px] ml-[4px] h-[24px] w-[2px] bg-[repeating-linear-gradient(#222_0_2px,transparent_2px_4px)]" />
      {toolGroups.map((group, i) => (
        <div key={group[0].icon} className="flex items-center">
          {i > 0 ? <div className="mx-[3px] h-[24px] w-px bg-[#dcdcdc]" /> : null}
          {group.map((tool) => (
            <div key={tool.icon} className="flex items-center">
              <button
                type="button"
                aria-label={tool.icon}
                className={clsx("grid h-[30px] place-items-center", tool.active ? "w-[29px] bg-[#9dc7ee]" : "w-[31px]")}
              >
                <Icon name={tool.icon} className="size-[25px]" />
              </button>
              {tool.caret ? (
                <span className={clsx("grid h-[30px] place-items-center pl-[2px]", tool.active ? "w-[14px] bg-[#d3e6f8]" : "w-[12px]")}>
                  <Caret color="fill-[#8a8a8a]" />
                </span>
              ) : null}
            </div>
          ))}
        </div>
      ))}
    </div>
  );
}

export default function App() {
  return (
    <div className="flex h-screen flex-col overflow-hidden bg-white font-['Noto_Sans','Open_Sans',sans-serif]">
      <TitleBar />
      <RibbonTabs />
      <Ribbon />
      <main className="flex min-h-0 flex-1 pt-px">
        <div className="flex min-w-0 flex-1 flex-col">
          <Scene />
          <Ruler />
        </div>
        <SidePanel />
      </main>
      <MarkToolbar />
      <footer className="h-[21px] bg-[#2a96fb] pl-[6px] text-[12px] leading-[24px] text-[#10294d]">Ready</footer>
      <div className="flex h-[2px] bg-[#0b4a86]">
        <div className="ml-[60px] w-[430px] bg-[#c9e8ff]" />
      </div>
    </div>
  );
}
